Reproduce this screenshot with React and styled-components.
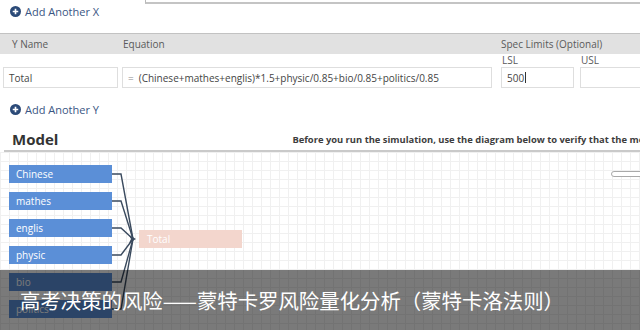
import React from 'react';
import styled, { createGlobalStyle } from 'styled-components';

const GlobalStyle = createGlobalStyle`
  html, body {
    margin: 0;
    padding: 0;
    background: #ffffff;
  }
  body {
    font-family: 'Open Sans', 'Noto Sans', sans-serif;
  }
`;

const inputs = ['Chinese', 'mathes', 'englis', 'physic', 'bio', 'politics'];

const PlusIcon = () => (
  <svg width="11" height="11" viewBox="0 0 12 12">
    <circle cx="6" cy="6" r="6" fill="#2b4a78" />
    <path d="M6 3v6M3 6h6" stroke="#fff" strokeWidth="1.8" />
  </svg>
);

const Connectors = () => {
  // node centres inside the canvas, arrow tip at the Total node
  const tipX = 136;
  const tipY = 87;
  return (
    <Wires width="160" height="181" viewBox="0 0 160 181">
      {inputs.map((name, i) => {
        const cy = 22 + i * 27;
        return (
          <path
            key={name}
            d={`M112 ${cy} L121 ${cy} L${tipX - 3} ${tipY}`}
            fill="none"
            stroke="#3a4a5e"
            strokeWidth="1.4"
          />
        );
      })}
      <path d={`M${tipX} ${tipY} L${tipX - 7} ${tipY - 4} L${tipX - 5} ${tipY} L${tipX - 7} ${tipY + 4} Z`} fill="#3a4a5e" />
    </Wires>
  );
};

export default function App() {
  return (
    <Page>
      <GlobalStyle />
      <TopStub />
      <AddLink>
        <PlusIcon />
        <span>Add Another X</span>
      </AddLink>

      <HeaderBar>
        <HeadCell $w={111}>Y Name</HeadCell>
        <HeadCell $w={378}>Equation</HeadCell>
        <HeadCell>Spec Limits (Optional)</HeadCell>
      </HeaderBar>

      <FieldRow>
        <TextBox $w={115}>Total</TextBox>
        <EquationBox>
          <Equals>=</Equals>
          <span>(Chinese+mathes+englis)*1.5+physic/0.85+bio/0.85+politics/0.85</span>
        </EquationBox>
        <SpecField>
          <SpecLabel>LSL</SpecLabel>
          <TextBox $w={73}>
            500<Caret />
          </TextBox>
        </SpecField>
        <SpecField>
          <SpecLabel>USL</SpecLabel>
          <TextBox $w={70} />
        </SpecField>
      </FieldRow>

      <AddLink $top={14}>
        <PlusIcon />
        <span>Add Another Y</span>
      </AddLink>

      <ModelHeader>
        <ModelTitle>Model</ModelTitle>
        <ModelNote>Before you run the simulation, use the diagram below to verify that the model is correct.</ModelNote>
      </ModelHeader>

      <Canvas>
        <NodeColumn>
          {inputs.map((name) => (
            <InputNode key={name}>{name}</InputNode>
          ))}
        </NodeColumn>
        <Connectors />
        <OutputNode>Total</OutputNode>
        <ZoomPill />
      </Canvas>

      <Caption>高考决策的风险——蒙特卡罗风险量化分析（蒙特卡洛法则）</Caption>
    </Page>
  );
}

const Page = styled.div`
  position: relative;
  width: 640px;
  height: 330px;
  overflow: hidden;
  background: #fff;
  color: #444;
`;

const TopStub = styled.div`
  margin-left: 145px;
  height: 2px;
  border-left: 1px solid #b8b8b8;
  border-bottom: 2px solid #c4c4c4;
`;

const AddLink = styled.div`
  display: flex;
  align-items: center;
  gap: 4px;
  height: 14px;
  margin: ${(p) => p.$top || 0}px 0 0 10px;
  font-size: 11px;
  color: #3a5683;
`;

const HeaderBar = styled.div`
  display: flex;
  align-items: center;
  height: 20px;
  margin-top: 15px;
  padding-left: 12px;
  background: #e1e1e1;
  border-top: 1px solid #c2c2c2;
`;

const HeadCell = styled.div`
  width: ${(p) => (p.$w ? `${p.$w}px` : 'auto')};
  font-size: 10px;
  color: #5a5a5a;
  white-space: nowrap;
`;

const FieldRow = styled.div`
  display: flex;
  align-items: flex-end;
  gap: 4px;
  padding-left: 3px;
`;

const TextBox = styled.div`
  box-sizing: border-box;
  display: flex;
  flex-shrink: 0;
  align-items: center;
  width: ${(p) => p.$w}px;
  height: 21px;
  padding-left: 5px;
  border: 1px solid #dedede;
  font-size: 10px;
  color: #444;
  background: #fff;
`;

const EquationBox = styled(TextBox).attrs({ $w: 370 })`
  gap: 5px;
  white-space: nowrap;
  overflow: hidden;
`;

const Equals = styled.span`
  color: #888;
`;

const Caret = styled.span`
  display: inline-block;
  width: 1px;
  height: 11px;
  margin-left: 1px;
  background: #333;
`;

const SpecField = styled.div`
  display: flex;
  flex-direction: column;
  flex-shrink: 0;
  gap: 1px;
  margin-left: 5px;
  &:last-child {
    margin-left: 2px;
  }
`;

const SpecLabel = styled.div`
  font-size: 10px;
  line-height: 12px;
  color: #5a5a5a;
  padding-left: 1px;
`;

const ModelHeader = styled.div`
  display: flex;
  align-items: flex-end;
  gap: 12px;
  margin: 14px 0 0 4px;
  padding: 0 0 2px 8px;
  border-bottom: 2px solid #c9c9c9;
  white-space: nowrap;
`;

const ModelTitle = styled.div`
  font-size: 15px;
  font-weight: 700;
  color: #333;
  line-height: 18px;
`;

const ModelNote = styled.div`
  flex: 1;
  padding-left: 222px;
  padding-bottom: 2px;
  font-size: 9.4px;
  font-weight: 700;
  color: #3d3d3d;
  overflow: hidden;
`;

const Canvas = styled.div`
  position: relative;
  height: 190px;
  padding: 13px 0 0 9px;
  background-color: #fff;
  background-image:
    linear-gradient(to right, #f0f0f0 1px, transparent 1px),
    linear-gradient(to bottom, #f0f0f0 1px, transparent 1px);
  background-size: 9px 9px;
`;

const NodeColumn = styled.div`
  display: flex;
  flex-direction: column;
  gap: 9px;
  width: 103px;
`;

const InputNode = styled.div`
  height: 18px;
  padding-left: 7px;
  background: #5b8fd7;
  color: #fff;
  font-size: 10px;
  line-height: 18px;
`;

const Wires = styled.svg`
  position: absolute;
  left: 0;
  top: 0;
`;

const OutputNode = styled.div`
  position: absolute;
  left: 139px;
  top: 78px;
  width: 95px;
  height: 18px;
  padding-left: 8px;
  background: #f3d6cd;
  color: #fff;
  font-size: 10px;
  line-height: 18px;
`;

const ZoomPill = styled.div`
  position: absolute;
  left: 611px;
  top: 19px;
  width: 40px;
  height: 4px;
  border: 1px solid #a9a9a9;
  border-radius: 3px;
  background: #fff;
`;

const Caption = styled.div`
  position: absolute;
  left: 0;
  right: 0;
  bottom: 0;
  height: 60px;
  display: flex;
  align-items: center;
  padding-left: 20px;
  background: rgba(0, 0, 0, 0.52);
  color: #fff;
  font-family: 'Noto Sans CJK SC', 'Noto Sans', sans-serif;
  font-size: 20.4px;
  white-space: nowrap;
`;
